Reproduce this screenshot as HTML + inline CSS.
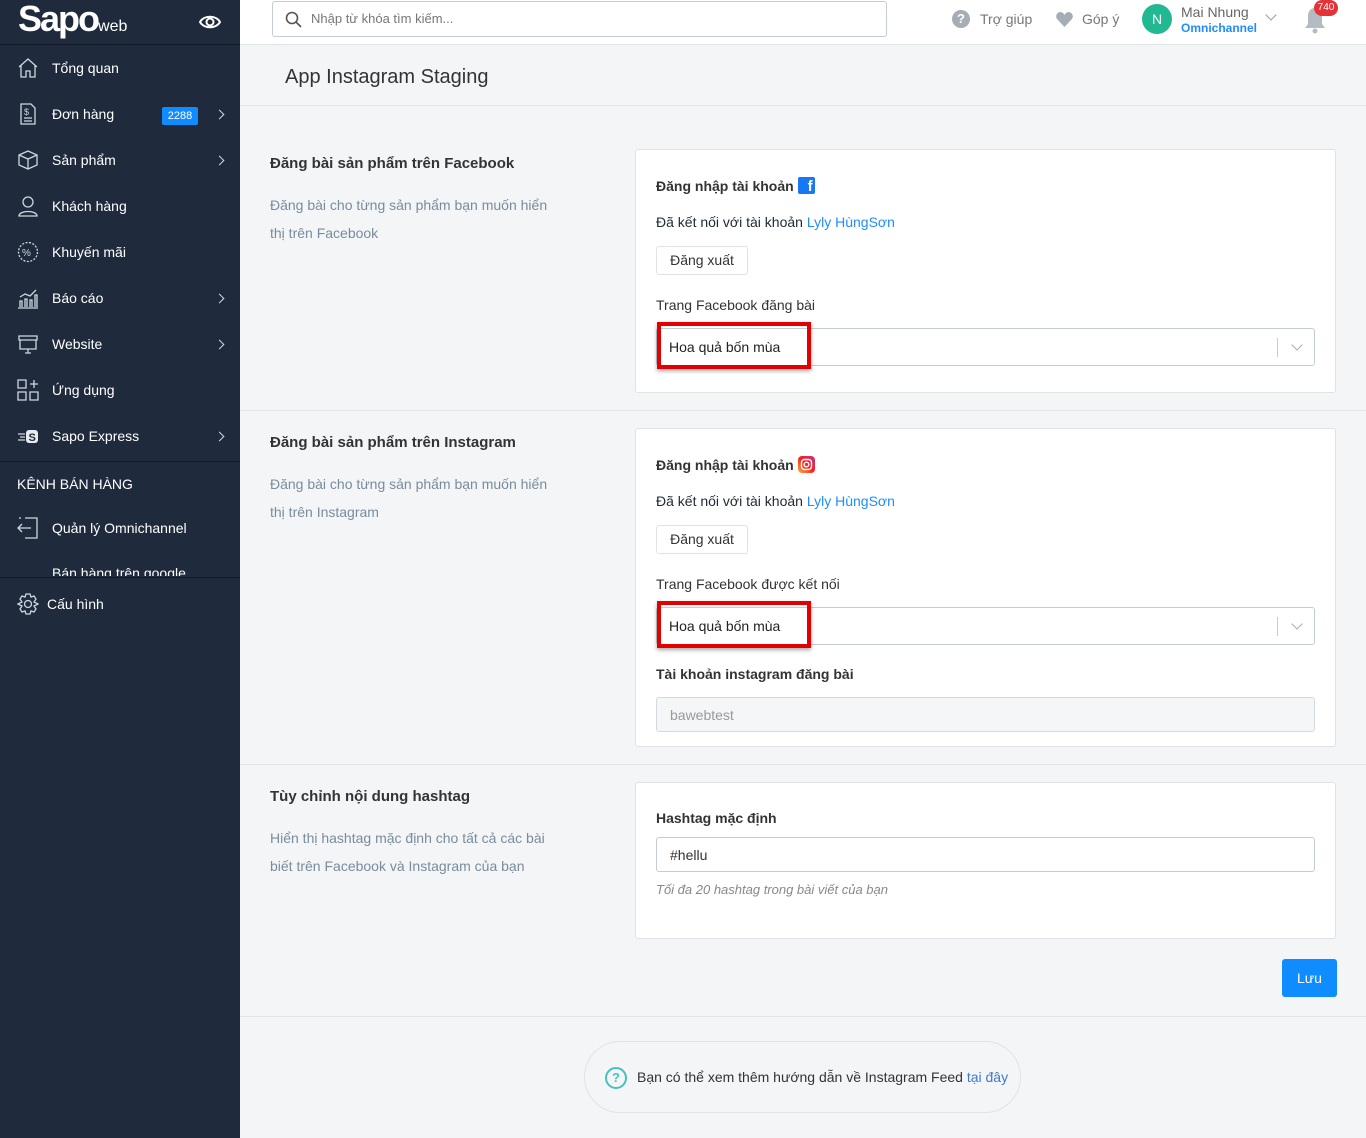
<!DOCTYPE html>
<html><head><meta charset="utf-8"><style>
*{box-sizing:border-box;margin:0;padding:0}
body{width:1366px;height:1138px;background:#f4f5f7;font-family:"Liberation Sans",sans-serif;font-size:14px;color:#212b35;position:relative;overflow:hidden}
.sb{position:absolute;left:0;top:0;width:240px;height:1138px;background:#1f2b3c;color:#fff}
.abs{position:absolute}
.it{position:absolute;left:0;width:240px;height:46px;display:flex;align-items:center;font-size:14px;color:#fff}
.it svg{position:absolute;left:17px}
.it span{position:absolute;left:52px}
.chev{position:absolute;left:216px;width:7px;height:7px;border-top:1.6px solid #cfd6e0;border-right:1.6px solid #cfd6e0;transform:rotate(45deg)}
.hdr{position:absolute;left:240px;top:0;width:1126px;height:45px;background:#fff;border-bottom:1px solid #dfe3e8}
.hline{position:absolute;left:240px;width:1126px;height:1px;background:#e1e4e8}
.card{position:absolute;left:635px;width:701px;background:#fff;border:1px solid #dfe3e8;border-radius:3px}
.lbl{position:absolute;left:20px;font-size:14px;color:#212b35}
.b{font-weight:bold;color:#333}
.btn{position:absolute;left:20px;width:92px;height:29px;border:1px solid #dfe3e8;border-radius:3px;background:#fff;text-align:center;line-height:27px;color:#333}
.sel{position:absolute;left:20px;width:659px;height:38px;border:1px solid #c4cdd5;border-radius:3px;background:#fff}
.red{position:absolute;left:21px;width:154px;height:47px;border:4px solid #e30000;box-shadow:0 2px 4px rgba(0,0,0,.35);padding:13px 0 0 8px;color:#222}
.stitle{position:absolute;left:270px;font-size:15px;font-weight:bold;color:#333}
.sdesc{position:absolute;left:270px;width:282px;color:#798c9c;line-height:28px}
a{color:#1f8dff;text-decoration:none}
</style></head><body>
<div class="sb">
 <div class="abs" style="left:18px;top:-3px;font-size:36px;font-weight:bold;letter-spacing:-2px;line-height:44px">Sapo<span style="font-size:16px;font-weight:normal;letter-spacing:0">web</span></div>
 <svg class="abs" style="left:199px;top:14px" width="22" height="16" viewBox="0 0 22 16"><path d="M1 8C5 1 17 1 21 8C17 15 5 15 1 8Z" fill="none" stroke="#fff" stroke-width="2"/><circle cx="11" cy="8" r="3.5" fill="none" stroke="#fff" stroke-width="2"/></svg>
 <div class="abs" style="left:0;top:44px;width:240px;height:1px;background:#111a26"></div>
 <div class="it" style="top:45px"><svg width="22" height="22" viewBox="0 0 22 22" fill="none" stroke="#cfd6e0" stroke-width="1.3"><path d="M2 10L11 2L20 10M4 8V20H9V14H13V20H18V8"/></svg><span>Tổng quan</span></div>
 <div class="it" style="top:91px"><svg width="22" height="22" viewBox="0 0 22 22" fill="none" stroke="#cfd6e0" stroke-width="1.3"><path d="M4 1H14L18 5V21H4Z M7 15H15M7 18H15"/><text x="7" y="12" font-size="9" fill="#cfd6e0" stroke="none">$</text></svg><span>Đơn hàng</span><div class="abs" style="left:162px;top:16px;width:36px;height:18px;background:#0f8cff;border-radius:2px;font-size:11px;text-align:center;line-height:18px">2288</div><i class="chev"></i></div>
 <div class="it" style="top:137px"><svg width="22" height="22" viewBox="0 0 22 22" fill="none" stroke="#cfd6e0" stroke-width="1.3"><path d="M2 6L11 2L20 6V16L11 20L2 16Z M2 6L11 10L20 6M11 10V20"/></svg><span>Sản phẩm</span><i class="chev"></i></div>
 <div class="it" style="top:183px"><svg width="22" height="22" viewBox="0 0 22 22" fill="none" stroke="#cfd6e0" stroke-width="1.3"><circle cx="11" cy="7" r="5"/><path d="M2 21C2 15 20 15 20 21Z"/></svg><span>Khách hàng</span></div>
 <div class="it" style="top:229px"><svg width="22" height="22" viewBox="0 0 22 22" fill="none" stroke="#cfd6e0" stroke-width="1.3"><circle cx="11" cy="11" r="9.5" stroke-dasharray="2 1.5"/><text x="5" y="15" font-size="10" fill="#cfd6e0" stroke="none">%</text></svg><span>Khuyến mãi</span></div>
 <div class="it" style="top:275px"><svg width="22" height="22" viewBox="0 0 22 22" fill="none" stroke="#cfd6e0" stroke-width="1.3"><path d="M1 21H21M3 20V14H5V20M8 20V12H10V20M13 20V13H15V20M18 20V8H20V20M3 10L8 7L13 9L19 3"/></svg><span>Báo cáo</span><i class="chev"></i></div>
 <div class="it" style="top:321px"><svg width="22" height="22" viewBox="0 0 22 22" fill="none" stroke="#cfd6e0" stroke-width="1.3"><path d="M2 3H20V7H2ZM3 7V16H19V7M8 20H14M11 16V20"/></svg><span>Website</span><i class="chev"></i></div>
 <div class="it" style="top:367px"><svg width="22" height="22" viewBox="0 0 22 22" fill="none" stroke="#cfd6e0" stroke-width="1.3"><path d="M1 1H9V9H1ZM1 13H9V21H1ZM13 13H21V21H13ZM17 1V9M13 5H21"/></svg><span>Ứng dụng</span></div>
 <div class="it" style="top:413px"><svg width="22" height="22" viewBox="0 0 22 22"><path d="M1 9H8M3 12H8M1 15H8" stroke="#cfd6e0" stroke-width="1.3"/><rect x="9" y="5" width="12" height="13" rx="3" fill="#e8ecf1"/><text x="11.5" y="16" font-size="11" font-weight="bold" fill="#1f2b3c">S</text></svg><span>Sapo Express</span><i class="chev"></i></div>
 <div class="abs" style="left:0;top:461px;width:240px;height:1px;background:#111a26"></div>
 <div class="abs" style="left:17px;top:476px;font-size:14px">KÊNH BÁN HÀNG</div>
 <div class="it" style="top:505px"><svg width="22" height="22" viewBox="0 0 22 22" fill="none" stroke="#cfd6e0" stroke-width="1.3"><path d="M8 1H20V21H8M1 11H14M5 7L1 11L5 15M2 1H4V1"/></svg><span>Quản lý Omnichannel</span></div>
 <div class="abs" style="left:0;top:562px;width:240px;height:14px;overflow:hidden"><div class="abs" style="left:52px;top:3px;font-size:14px">Bán hàng trên google</div></div>
 <div class="abs" style="left:0;top:577px;width:240px;height:1px;background:#111a26"></div>
 <div class="it" style="top:581px"><svg width="22" height="22" viewBox="0 0 22 22" fill="none" stroke="#cfd6e0" stroke-width="1.3"><circle cx="11" cy="11" r="3.5"/><path d="M9 1H13L14 4L17 3L19 6L17 9L21 11L17 13L19 16L17 19L14 18L13 21H9L8 18L5 19L3 16L5 13L1 11L5 9L3 6L5 3L8 4Z"/></svg><span style="left:47px">Cấu hình</span></div>
</div>

<div class="hdr">
 <div class="abs" style="left:32px;top:1px;width:615px;height:36px;border:1px solid #c4cdd5;border-radius:3px"><svg class="abs" style="left:12px;top:9px" width="17" height="17" viewBox="0 0 17 17" fill="none" stroke="#555" stroke-width="1.6"><circle cx="7" cy="7" r="5.5"/><path d="M11 11L16 16"/></svg><span class="abs" style="left:38px;top:9px;color:#777;font-size:13px">Nhập từ khóa tìm kiếm...</span></div>
 <div class="abs" style="left:712px;top:10px;width:18px;height:18px;border-radius:50%;background:#a5adb5;color:#fff;font-size:13px;font-weight:bold;text-align:center;line-height:18px">?</div>
 <span class="abs" style="left:740px;top:11px;color:#777">Trợ giúp</span>
 <svg class="abs" style="left:816px;top:12px" width="17" height="15" viewBox="0 0 17 15"><path d="M8.5 15L1 7C-1 4 1 0 4.5 0C6.5 0 8 2 8.5 3C9 2 10.5 0 12.5 0C16 0 18 4 16 7Z" fill="#a5adb5"/></svg>
 <span class="abs" style="left:842px;top:11px;color:#777">Góp ý</span>
 <div class="abs" style="left:902px;top:4px;width:30px;height:30px;border-radius:50%;background:#21b892;color:#fff;text-align:center;line-height:30px;font-size:14px">N</div>
 <span class="abs" style="left:941px;top:4px;color:#666">Mai Nhung</span>
 <span class="abs" style="left:941px;top:21px;color:#1f8dff;font-size:12px;font-weight:bold">Omnichannel</span>
 <i class="abs" style="left:1027px;top:11px;width:8px;height:8px;border-right:1.3px solid #999;border-bottom:1.3px solid #999;transform:rotate(45deg)"></i>
 <svg class="abs" style="left:1064px;top:6px" width="22" height="28" viewBox="0 0 22 28"><path d="M11 2C6 2 4 6 4 10V18L1 22H21L18 18V10C18 6 16 2 11 2Z" fill="#b5bbc2"/><circle cx="11" cy="25" r="2.5" fill="#b5bbc2"/></svg>
 <div class="abs" style="left:1074px;top:0;width:24px;height:16px;border-radius:8px;background:#e53238;color:#fff;font-size:10px;text-align:center;line-height:16px">740</div>
</div>
<div class="abs" style="left:285px;top:66px;font-size:20px;color:#333">App Instagram Staging</div>
<div class="hline" style="top:105px"></div>
<div class="hline" style="top:410px"></div>
<div class="hline" style="top:764px"></div>
<div class="hline" style="top:1016px"></div>

<div class="stitle" style="top:155px">Đăng bài sản phẩm trên Facebook</div>
<div class="sdesc" style="top:191px">Đăng bài cho từng sản phẩm bạn muốn hiển thị trên Facebook</div>
<div class="card" style="top:149px;height:244px">
 <div class="lbl b" style="top:27px">Đăng nhập tài khoản <span style="display:inline-block;width:17px;height:17px;background:#1877f2;border-radius:2px;color:#fff;font-size:15px;text-align:right;line-height:20px;vertical-align:-3px;overflow:hidden;padding-right:2px">f</span></div>
 <div class="lbl" style="top:64px">Đã kết nối với tài khoản <a>Lyly HùngSơn</a></div>
 <div class="btn" style="top:96px">Đăng xuất</div>
 <div class="lbl" style="top:147px;color:#333">Trang Facebook đăng bài</div>
 <div class="sel" style="top:178px"><div class="abs" style="left:620px;top:9px;width:1px;height:19px;background:#ccc"></div><i class="abs" style="left:636px;top:12px;width:8px;height:8px;border-right:1.3px solid #aaa;border-bottom:1.3px solid #aaa;transform:rotate(45deg)"></i></div>
 <div class="red" style="top:172px">Hoa quả bốn mùa</div>
</div>

<div class="stitle" style="top:434px">Đăng bài sản phẩm trên Instagram</div>
<div class="sdesc" style="top:470px">Đăng bài cho từng sản phẩm bạn muốn hiển thị trên Instagram</div>
<div class="card" style="top:428px;height:319px">
 <div class="lbl b" style="top:27px">Đăng nhập tài khoản <svg width="17" height="17" viewBox="0 0 17 17" style="vertical-align:-3px"><defs><linearGradient id="g" x1="0" y1="1" x2="1" y2="0"><stop offset="0" stop-color="#fcb045"/><stop offset=".5" stop-color="#fd1d1d"/><stop offset="1" stop-color="#c13584"/></linearGradient></defs><rect width="17" height="17" rx="4" fill="url(#g)"/><rect x="3.5" y="3.5" width="10" height="10" rx="3" fill="none" stroke="#fff" stroke-width="1.4"/><circle cx="8.5" cy="8.5" r="2.3" fill="none" stroke="#fff" stroke-width="1.4"/></svg></div>
 <div class="lbl" style="top:64px">Đã kết nối với tài khoản <a>Lyly HùngSơn</a></div>
 <div class="btn" style="top:96px">Đăng xuất</div>
 <div class="lbl" style="top:147px;color:#333">Trang Facebook được kết nối</div>
 <div class="sel" style="top:178px"><div class="abs" style="left:620px;top:9px;width:1px;height:19px;background:#ccc"></div><i class="abs" style="left:636px;top:12px;width:8px;height:8px;border-right:1.3px solid #aaa;border-bottom:1.3px solid #aaa;transform:rotate(45deg)"></i></div>
 <div class="red" style="top:172px">Hoa quả bốn mùa</div>
 <div class="lbl b" style="top:237px">Tài khoản instagram đăng bài</div>
 <div class="sel" style="top:268px;height:35px;background:#f4f6f8;border-color:#d3d9df;color:#999;padding:9px 13px">bawebtest</div>
</div>

<div class="stitle" style="top:788px">Tùy chỉnh nội dung hashtag</div>
<div class="sdesc" style="top:824px">Hiển thị hashtag mặc định cho tất cả các bài biết trên Facebook và Instagram của bạn</div>
<div class="card" style="top:782px;height:157px">
 <div class="lbl b" style="top:27px">Hashtag mặc định</div>
 <div class="sel" style="top:54px;height:35px;padding:9px 13px;color:#333">#hellu</div>
 <div class="lbl" style="top:99px;font-style:italic;font-size:13px;color:#888">Tối đa 20 hashtag trong bài viết của bạn</div>
</div>
<div class="abs" style="left:1282px;top:959px;width:55px;height:38px;background:#0f8cff;border-radius:3px;color:#fff;text-align:center;line-height:38px">Lưu</div>

<div class="abs" style="left:584px;top:1041px;width:437px;height:72px;border:1px solid #dfe3e8;border-radius:36px"></div>
<div class="abs" style="left:605px;top:1067px;width:22px;height:22px;border:2.5px solid #47c1bf;border-radius:50%;color:#47c1bf;font-weight:bold;font-size:13px;text-align:center;line-height:17px">?</div>
<div class="abs" style="left:637px;top:1069px;color:#333">Bạn có thể xem thêm hướng dẫn về Instagram Feed <a style="color:#3d7ac9">tại đây</a></div>
</body></html>
